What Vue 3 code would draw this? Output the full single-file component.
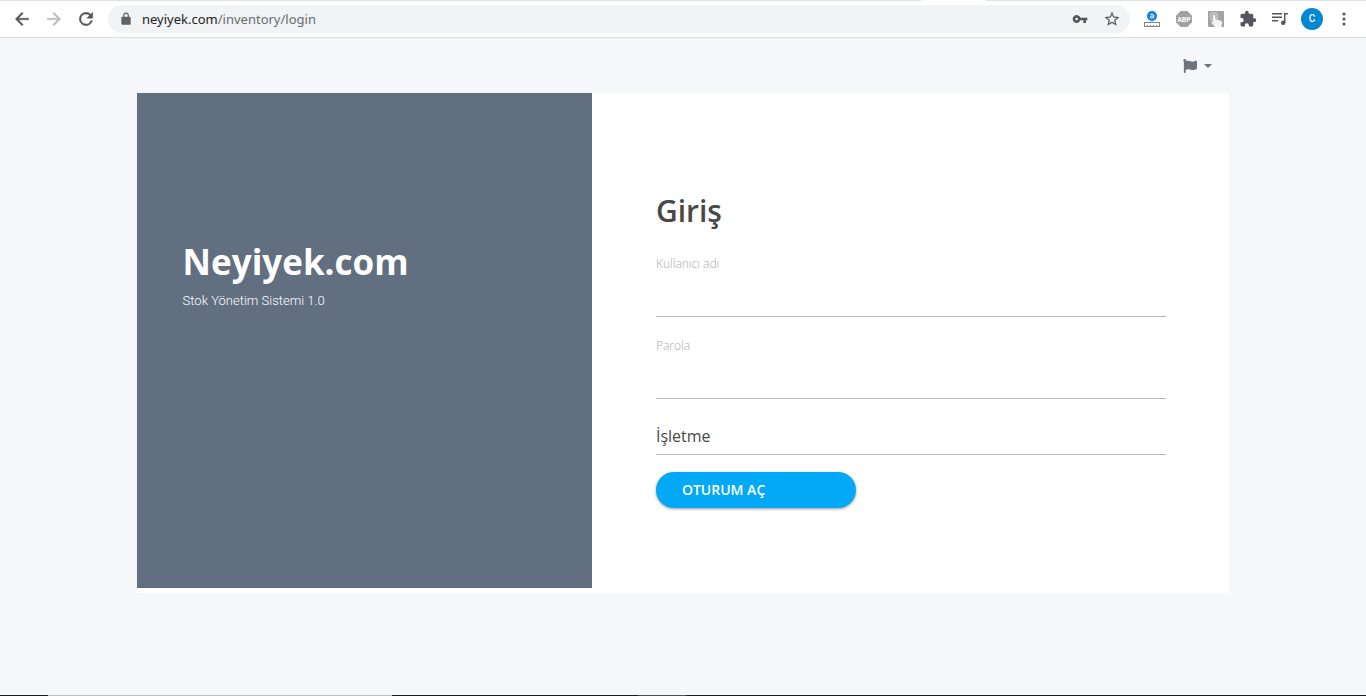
<script setup>
import { ref } from 'vue'

const address = ref('neyiyek.com/inventory/login')
const username = ref('')
const password = ref('')
const business = ref('')
</script>

<template>
  <div class="window">
    <header class="toolbar">
      <div class="tab-edge"><span class="edge-line"></span><span class="active-tab"></span><span class="edge-rest"></span></div>
      <nav class="nav">
        <button type="button" class="icon-btn" aria-label="Geri">
          <svg width="20" height="20" viewBox="0 0 24 24"><path fill="#54575b" stroke="#54575b" stroke-width=".5" d="M20 11H7.83l5.59-5.59L12 4l-8 8 8 8 1.41-1.41L7.83 13H20v-2z" /></svg>
        </button>
        <button type="button" class="icon-btn" aria-label="İleri">
          <svg width="20" height="20" viewBox="0 0 24 24"><path fill="#babcbe" stroke="#babcbe" stroke-width=".5" d="M12 4l-1.410 1.410L16.170 11H4v2h12.170l-5.580 5.590L12 20l8-8z" /></svg>
        </button>
        <button type="button" class="icon-btn" aria-label="Yenile">
          <svg width="20" height="20" viewBox="0 0 24 24"><path fill="#54575b" d="M17.65 6.35A7.96 7.96 0 0 0 12 4a8 8 0 1 0 7.73 10h-2.08A6 6 0 1 1 12 6c1.66 0 3.14.69 4.22 1.78L13 11h7V4l-2.35 2.35z" stroke="#54575b" stroke-width=".6" /></svg>
        </button>
      </nav>
      <div class="address">
        <svg class="lock" width="14" height="14" viewBox="0 0 24 24"><path fill="#5f6368" d="M18 8h-1V6A5 5 0 0 0 7 6v2H6a2 2 0 0 0-2 2v10c0 1.1.9 2 2 2h12a2 2 0 0 0 2-2V10a2 2 0 0 0-2-2zM9 6a3 3 0 0 1 6 0v2H9V6z" /></svg>
        <span class="url"><span class="host">{{ address.split('/')[0] }}</span>/{{ address.split('/').slice(1).join('/') }}</span>
        <button type="button" class="icon-btn" aria-label="Parolalar">
          <svg width="16" height="16" viewBox="0 0 24 24"><path fill="#54575b" d="M12.65 10A6 6 0 1 0 12.65 14H17v4h4v-4h2v-4H12.65zM7 14a2 2 0 1 1 0-4 2 2 0 0 1 0 4z" /></svg>
        </button>
        <button type="button" class="icon-btn" aria-label="Yer işareti">
          <svg width="18" height="18" viewBox="0 0 24 24"><path fill="#54575b" d="M22 9.24l-7.19-.62L12 2 9.19 8.63 2 9.24l5.46 4.73L5.82 21 12 17.27 18.18 21l-1.63-7.03L22 9.24zM12 15.4l-3.76 2.27 1-4.28-3.32-2.88 4.38-.38L12 6.1l1.71 4.04 4.38.38-3.32 2.88 1 4.28L12 15.4z" /></svg>
        </button>
      </div>
      <div class="extensions">
        <button type="button" class="icon-btn" aria-label="Ölçüm">
          <svg width="16" height="16" viewBox="0 0 16 16"><circle cx="8" cy="5" r="5" fill="#0d7df2" /><path d="M7 9h2l-1 2z" fill="#0d7df2" /><path d="M6.300 3.500q3-1.200 3.300.6v3M9.500 5q-3.300-.2-3.300 1.200c0 1.400 2.700 1.200 3.300-.2" fill="none" stroke="#fff" stroke-width="1" /><path d="M.5 11v5M15.500 11v5M1 11.500h14M1 15.500h14M3.500 14v1M6.500 14v1M9.500 14v1M12.500 14v1" fill="none" stroke="#7c8490" stroke-width="1" /></svg>
        </button>
        <button type="button" class="icon-btn" aria-label="Adblock Plus">
          <svg width="16" height="16" viewBox="0 0 16 16"><path d="M4.700 0h6.600L16 4.700v6.600L11.300 16H4.700L0 11.300V4.700z" fill="#a1a1a1" /><text x="8" y="11" class="abp">ABP</text></svg>
        </button>
        <button type="button" class="icon-btn" aria-label="Tıklayıcı">
          <svg width="16" height="16" viewBox="0 0 16 16"><rect width="16" height="16" rx="1" fill="#a3a3a3" /><circle cx="6" cy="5.500" r="4.500" fill="#c4c4c4" /><circle cx="6" cy="5.500" r="2.700" fill="#adadad" /><path d="M5 4.200c.7-1 2.300-.4 2.300.8v3.400l4.900 1.200c1.500.4 2.100 1.200 1.900 2.500L13.300 16H7.200L3.300 11.500c-.5-1 .5-1.600 1.700-.5z" fill="#f2f5fb" /></svg>
        </button>
        <button type="button" class="icon-btn" aria-label="Uzantılar">
          <svg width="18" height="18" viewBox="0 0 24 24"><path fill="#54575b" d="M20.500 11H19V7a2 2 0 0 0-2-2h-4V3.500a2.500 2.500 0 0 0-5 0V5H4a2 2 0 0 0-2 2v3.800h1.500a2.700 2.700 0 0 1 0 5.400H2V20c0 1.100.9 2 2 2h3.800v-1.500a2.700 2.700 0 0 1 5.400 0V22H17a2 2 0 0 0 2-2v-4h1.500a2.500 2.500 0 0 0 0-5z" /></svg>
        </button>
        <button type="button" class="icon-btn" aria-label="Medya">
          <svg width="16" height="16" viewBox="0 0 16 16"><path d="M0 2.700h10M0 6.200h10M0 9.700h6M12.700 12V2.700H16" fill="none" stroke="#54575b" stroke-width="1.500" /><circle cx="11.200" cy="11.800" r="2.200" fill="#54575b" /></svg>
        </button>
        <button type="button" class="avatar" aria-label="Profil">C</button>
        <button type="button" class="icon-btn menu" aria-label="Menü">
          <svg width="4" height="14" viewBox="0 0 4 14"><g fill="#54575b"><circle cx="2" cy="2" r="1.600" /><circle cx="2" cy="7" r="1.600" /><circle cx="2" cy="12" r="1.600" /></g></svg>
        </button>
      </div>
    </header>

    <main class="page">
      <div class="language">
        <button type="button" class="lang-btn" aria-label="Dil">
          <svg width="14" height="14" viewBox="0 0 512 512"><path fill="#6c757d" d="M349.565 98.783C295.978 98.783 251.721 64 184.348 64c-24.955 0-47.309 4.384-68.045 12.013a55.947 55.947 0 0 0 3.586-23.562C118.117 24.015 94.806 1.206 66.338.048 34.345-1.254 8 24.296 8 56c0 19.026 9.497 35.825 24 45.945V488c0 13.255 10.745 24 24 24h16c13.255 0 24-10.745 24-24v-94.400c28.311-12.064 63.582-22.122 114.435-22.122 53.588 0 97.844 34.783 165.217 34.783 48.169 0 86.667-16.294 122.505-40.858C506.840 359.452 512 349.571 512 339.045v-243.100c0-23.393-24.269-38.870-45.485-29.016-34.338 15.948-76.454 31.854-116.950 31.854z" /></svg>
          <span class="caret"></span>
        </button>
      </div>
      <div class="card">
        <section class="brand">
          <h1>Neyiyek.com</h1>
          <p>Stok Yönetim Sistemi 1.0</p>
        </section>
        <form class="login" @submit.prevent>
          <h2>Giriş</h2>
          <div class="field">
            <label for="username">Kullanıcı adı</label>
            <input id="username" v-model="username" type="text">
          </div>
          <div class="field">
            <label for="password">Parola</label>
            <input id="password" v-model="password" type="password">
          </div>
          <select v-model="business" class="business" aria-label="İşletme">
            <option value="">İşletme</option>
          </select>
          <button type="submit" class="submit">OTURUM AÇ</button>
        </form>
      </div>
    </main>
    <footer class="taskbar"><span class="dark start"></span><span class="light"></span><span class="dark mid"></span><span class="gray"></span><span class="dark rest"></span></footer>
  </div>
</template>

<style>
body {
  margin: 0;
  background: #f5f7fb;
}
</style>

<style scoped>
.window {
  display: flex;
  flex-direction: column;
  min-height: 100vh;
  font-family: "Open Sans", "Noto Sans", sans-serif;
  background: #f5f7fb;
}
.window * {
  box-sizing: border-box;
}
.toolbar {
  position: relative;
  display: flex;
  align-items: center;
  height: 38px;
  background: #fff;
  border-bottom: 1px solid #dcdee2;
}
.tab-edge {
  position: absolute;
  inset: 0 0 auto;
  display: flex;
  height: 1px;
}
.edge-line {
  width: 921px;
  background: #dee1e6;
}
.active-tab {
  width: 65px;
}
.edge-rest {
  flex: 1;
  background: #dee1e6;
}
button {
  margin: 0;
  padding: 0;
  border: 0;
  background: none;
  font-family: inherit;
}
.icon-btn {
  display: flex;
  align-items: center;
  justify-content: center;
  width: 32px;
  height: 28px;
}
.nav {
  display: flex;
  padding: 0 6px;
}
.address {
  display: flex;
  flex: 1;
  align-items: center;
  height: 28px;
  padding: 0 2px 0 11px;
  border-radius: 14px;
  background: #f1f3f4;
}
.lock {
  margin-right: 9px;
}
.url {
  flex: 1;
  color: #686b70;
  font-family: "Noto Sans", sans-serif;
  font-size: 13px;
  line-height: 20px;
}
.host {
  color: #202124;
}
.extensions {
  display: flex;
  align-items: center;
  padding: 0 6px;
}
.abp {
  fill: #fff;
  font: bold 7px "Roboto", sans-serif;
  text-anchor: middle;
}
.avatar {
  width: 22px;
  height: 22px;
  margin: 0 5px;
  border-radius: 50%;
  background: #0288d1;
  color: #fff;
  font-family: "Roboto", sans-serif;
  font-size: 10px;
  font-weight: 500;
  line-height: 22px;
  text-align: center;
}
.page {
  flex: 1;
  width: 80%;
  margin: 0 auto;
}
.language {
  display: flex;
  justify-content: flex-end;
  height: 55px;
  padding: 0 17px;
}
.lang-btn {
  display: flex;
  align-items: center;
  gap: 7px;
  height: 56px;
}
.caret {
  border: 4px solid transparent;
  border-top-color: #6c757d;
  border-bottom: 0;
}
.card {
  display: grid;
  grid-template-columns: 5fr 7fr;
  min-height: 500px;
  background: #fff;
}
.brand {
  margin-bottom: 5px;
  padding: 144px 46px 0;
  background: #626f80;
  color: #fff;
}
h1,
h2,
p {
  margin: 0;
}
h1 {
  font-size: 35px;
  font-weight: 700;
  line-height: 50px;
}
.brand p {
  font-family: "Roboto", sans-serif;
  font-size: 13px;
  font-weight: 300;
  line-height: 28px;
}
.login {
  padding: 97px 63px 0 64px;
}
h2 {
  margin-bottom: 3px;
  color: #484848;
  font-size: 30px;
  font-weight: 600;
  line-height: 42px;
}
.field {
  display: flex;
  flex-direction: column;
  padding-top: 19px;
}
.field label {
  color: #aaa;
  font-size: 12px;
  font-weight: 300;
  line-height: 20px;
}
.field input {
  width: 100%;
  height: 43px;
  padding: 0;
  border: 0;
  border-bottom: 1px solid #b8b8b8;
  outline: 0;
  background: transparent;
  font: 400 16px "Open Sans", sans-serif;
}
.business {
  display: block;
  width: 100%;
  height: 38px;
  margin-top: 18px;
  padding: 0;
  border: 0;
  border-bottom: 1px solid #b8b8b8;
  border-radius: 0;
  outline: 0;
  appearance: none;
  background: transparent;
  color: #484848;
  font: 400 16px "Open Sans", sans-serif;
}
.submit {
  display: block;
  width: 200px;
  height: 36px;
  margin-top: 17px;
  padding: 0 26px 1px;
  border-radius: 18px;
  background: #03a9f4;
  box-shadow: 0 1px 3px rgba(0, 0, 0, 0.4);
  color: #fff;
  font-size: 14px;
  font-weight: 600;
  text-align: left;
}
.taskbar {
  display: flex;
  height: 1px;
}
.dark {
  background: #1b1b1b;
}
.start {
  width: 48px;
}
.light {
  width: 344px;
  background: #bebebe;
}
.mid {
  width: 246px;
}
.gray {
  width: 48px;
  background: #505050;
}
.rest {
  flex: 1;
}
</style>
